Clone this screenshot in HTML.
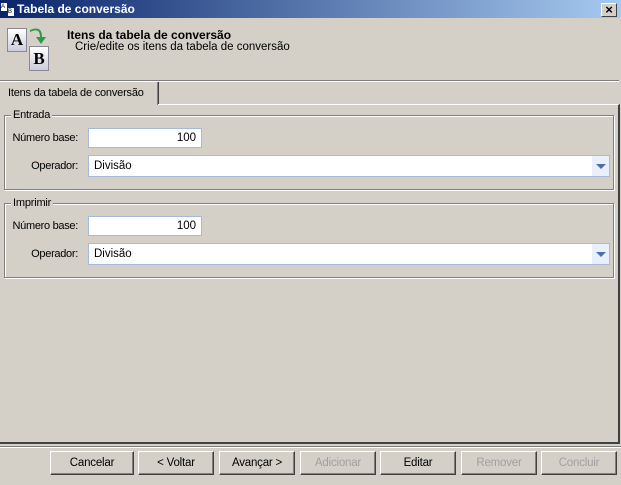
<!DOCTYPE html>
<html><head><style>
*{margin:0;padding:0;box-sizing:border-box}
body{width:621px;height:485px;background:#d4d0c8;font-family:"Liberation Sans",sans-serif;font-size:11px;position:relative;overflow:hidden;color:#000}
.a{position:absolute;white-space:nowrap}
.title{left:0;top:0;width:621px;height:18px;background:linear-gradient(90deg,#0a246a,#a6caf0);color:#fff;font-weight:bold;font-size:12px;line-height:18px;padding-left:17px}
.close{left:601px;top:3px;width:16px;height:14px;background:#d4d0c8;border:1px solid;border-color:#fff #404040 #404040 #fff;font-size:13px;line-height:11px;text-align:center;color:#000;font-weight:bold}
.grp{border:1px solid #808080;box-shadow:1px 1px 0 #fff, inset 1px 1px 0 #fff}
.lg{background:#d4d0c8;padding:0 2px;top:-7px;left:6px;line-height:12px;font-size:11px;letter-spacing:-0.2px}
.in{background:#fff;border:1px solid #a5b9d8;text-align:right;padding-right:5px;line-height:18px;font-size:11.5px}
.cb{background:#fff;border:1px solid #a5b9d8;padding-left:5px;line-height:20px;font-size:11.5px}
.dd{right:0;top:0;width:17px;height:20px;background:#eaf0fb}
.dd:after{content:"";position:absolute;left:4px;top:8px;border-left:5px solid transparent;border-right:5px solid transparent;border-top:5px solid #4d6fa8}
.lb{font-size:11px;letter-spacing:-0.3px;text-align:right;width:78px;left:0}
.btn{top:451px;height:24px;border:1px solid;border-color:#fff #404040 #404040 #fff;box-shadow:inset -1px -1px 0 #808080;text-align:center;line-height:22px;font-size:11.5px;letter-spacing:-0.2px}
.dis{color:#a0a0a0}
</style></head><body>
<div class="a title">Tabela de conversão</div>
<div class="a" style="left:1px;top:3px;width:6px;height:8px;background:#fff;font-size:6px;color:#000;line-height:8px">A</div>
<div class="a" style="left:8px;top:8px;width:6px;height:8px;background:#fff;font-size:6px;color:#000;line-height:8px">B</div>
<div class="a close">×</div>
<div class="a" style="left:7px;top:28px;width:20px;height:24px;background:linear-gradient(#fff,#ccd);border:1px solid #889;font:bold 17px 'Liberation Serif',serif;text-align:center;line-height:22px">A</div>
<div class="a" style="left:29px;top:46px;width:20px;height:25px;background:linear-gradient(#fff,#ccd);border:1px solid #889;font:bold 17px 'Liberation Serif',serif;text-align:center;line-height:24px">B</div>
<svg class="a" style="left:28px;top:27px" width="20" height="20"><path d="M2 5 Q12 0 12 10 L8 10 L13 17 L18 10 L14 10 Q14 -2 2 3Z" fill="#2e9a4a"/></svg>
<div class="a" style="left:67px;top:28px;font-weight:bold;font-size:12px">Itens da tabela de conversão</div>
<div class="a" style="left:75px;top:41px;font-size:11.5px">Crie/edite os itens da tabela de conversão</div>
<div class="a" style="left:0;top:80px;width:619px;height:2px;border-top:1px solid #808080;border-bottom:1px solid #fff"></div>
<div class="a" style="left:0;top:82px;width:159px;height:23px;border-right:1px solid #404040;box-shadow:inset -1px 0 0 #808080;font-size:11px;letter-spacing:-0.2px;line-height:22px;padding-left:8px">Itens da tabela de conversão</div>
<div class="a" style="left:158px;top:104px;width:462px;height:340px;border-top:1px solid #fff;border-right:2px solid #404040"></div>
<div class="a" style="left:0;top:442px;width:620px;height:2px;background:#404040"></div>
<div class="a" style="left:0;top:446px;width:621px;height:2px;border-top:1px solid #808080;border-bottom:1px solid #fff"></div>

<div class="a grp" style="left:4px;top:115px;width:610px;height:75px"><div class="a lg">Entrada</div></div>
<div class="a lb" style="top:132px">Número base:</div>
<div class="a in" style="left:88px;top:128px;width:114px;height:20px">100</div>
<div class="a lb" style="top:160px">Operador:</div>
<div class="a cb" style="left:88px;top:155px;width:522px;height:22px">Divisão<div class="a dd"></div></div>

<div class="a grp" style="left:4px;top:203px;width:610px;height:75px"><div class="a lg">Imprimir</div></div>
<div class="a lb" style="top:220px">Número base:</div>
<div class="a in" style="left:88px;top:216px;width:114px;height:20px">100</div>
<div class="a lb" style="top:248px">Operador:</div>
<div class="a cb" style="left:88px;top:243px;width:522px;height:22px">Divisão<div class="a dd"></div></div>

<div class="a btn" style="left:50px;width:84px">Cancelar</div>
<div class="a btn" style="left:138px;width:76px">&lt; Voltar</div>
<div class="a btn" style="left:219px;width:76px">Avançar &gt;</div>
<div class="a btn dis" style="left:300px;width:76px">Adicionar</div>
<div class="a btn" style="left:380px;width:76px">Editar</div>
<div class="a btn dis" style="left:461px;width:76px">Remover</div>
<div class="a btn dis" style="left:541px;width:76px">Concluir</div>
</body></html>
